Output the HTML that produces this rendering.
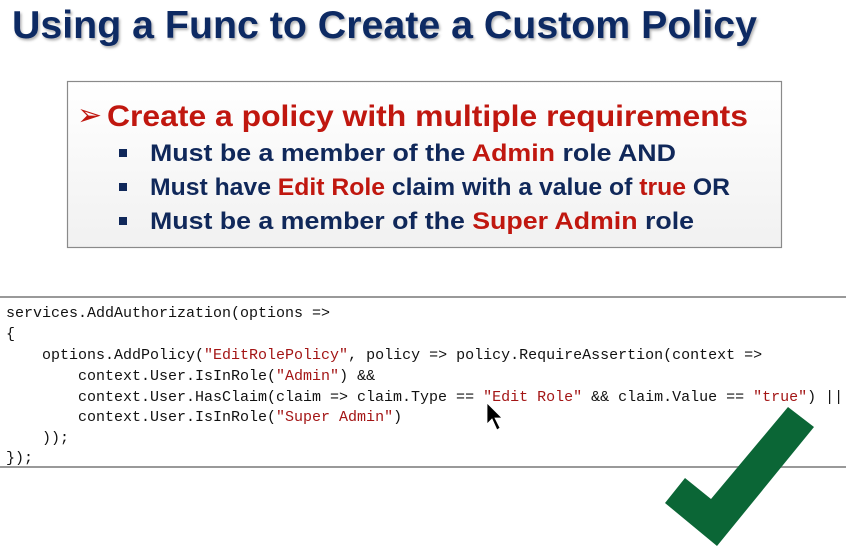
<!DOCTYPE html>
<html><head><meta charset="utf-8"><style>
html,body{margin:0;padding:0;background:#fff;}
svg{display:block}
</style></head><body>
<svg width="846" height="559" viewBox="0 0 846 559" xmlns="http://www.w3.org/2000/svg">
<defs>
<linearGradient id="g" x1="0" y1="0" x2="0" y2="1"><stop offset="0" stop-color="#ffffff"/><stop offset="1" stop-color="#f1f1f1"/></linearGradient>
<filter id="s"><feDropShadow dx="1.5" dy="2" stdDeviation="1.2" flood-color="#000" flood-opacity="0.3"/></filter>
</defs>
<rect width="846" height="559" fill="#fff"/>
<text x="12" y="38" font-family="Liberation Sans, sans-serif" font-weight="bold" font-size="39" fill="#0f2a63" textLength="745" lengthAdjust="spacingAndGlyphs" filter="url(#s)">Using a Func to Create a Custom Policy</text>
<rect x="67.5" y="81.5" width="714" height="166" fill="url(#g)" stroke="#8a8a8a" stroke-width="1.2"/>
<text x="77" y="125" font-family="DejaVu Sans, sans-serif" font-size="30" fill="#c0170f">➢</text>
<text x="107" y="126" font-family="Liberation Sans, sans-serif" font-weight="bold" font-size="30" fill="#c0170f" textLength="641" lengthAdjust="spacingAndGlyphs">Create a policy with multiple requirements</text>
<g fill="#10285a"><rect x="119" y="149" width="8" height="8"/><rect x="119" y="183" width="8" height="8"/><rect x="119" y="217" width="8" height="8"/></g>
<g font-family="Liberation Sans, sans-serif" font-weight="bold" font-size="24" fill="#10285a">
<text x="150" y="161" textLength="526" lengthAdjust="spacingAndGlyphs">Must be a member of the <tspan fill="#c0170f">Admin</tspan> role AND</text>
<text x="150" y="195" textLength="580" lengthAdjust="spacingAndGlyphs">Must have <tspan fill="#c0170f">Edit Role</tspan> claim with a value of <tspan fill="#c0170f">true</tspan> OR</text>
<text x="150" y="229" textLength="544" lengthAdjust="spacingAndGlyphs">Must be a member of the <tspan fill="#c0170f">Super Admin</tspan> role</text>
</g>
<line x1="0" y1="297" x2="846" y2="297" stroke="#999" stroke-width="2"/>
<line x1="0" y1="467" x2="846" y2="467" stroke="#999" stroke-width="2"/>
<g font-family="Liberation Mono, monospace" font-size="15" fill="#111">
<text x="6" y="317">services.AddAuthorization(options =&gt;</text>
<text x="6" y="338">{</text>
<text x="42" y="359">options.AddPolicy(<tspan fill="#a31515">"EditRolePolicy"</tspan>, policy =&gt; policy.RequireAssertion(context =&gt;</text>
<text x="78" y="380">context.User.IsInRole(<tspan fill="#a31515">"Admin"</tspan>) &amp;&amp;</text>
<text x="78" y="401">context.User.HasClaim(claim =&gt; claim.Type == <tspan fill="#a31515">"Edit Role"</tspan> &amp;&amp; claim.Value == <tspan fill="#a31515">"true"</tspan>) ||</text>
<text x="78" y="421">context.User.IsInRole(<tspan fill="#a31515">"Super Admin"</tspan>)</text>
<text x="42" y="442">));</text>
<text x="6" y="462">});</text>
</g>
<path d="M487 403 L487 424 L492 419 L497 430 L500 428 L495 418 L502 418 Z" fill="#000" stroke="#fff" stroke-width="0.8"/>
<polygon points="665,503 685,478 711,499 788,407 814,427 717,546" fill="#0b6636"/>
</svg>
</body></html>
